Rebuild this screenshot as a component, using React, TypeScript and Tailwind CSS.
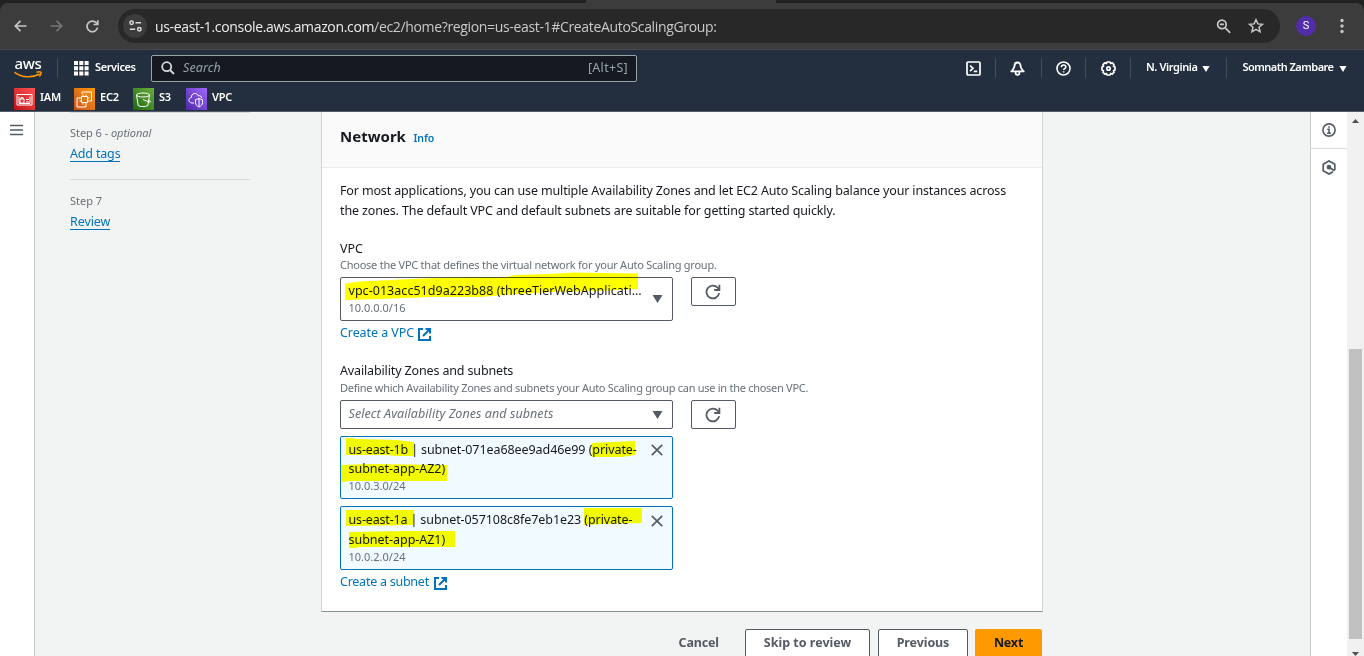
import type { ReactNode } from 'react';

function Highlight({ points, className }: { points: string; className: string }) {
  return (
    <svg className={`pointer-events-none absolute mix-blend-multiply ${className}`} fill="#ffff00">
      <polygon points={points} />
    </svg>
  );
}

function Caret({ className = 'h-[8px] w-[11px]' }: { className?: string }) {
  return (
    <svg viewBox="0 0 11 8" fill="currentColor" preserveAspectRatio="none" className={`shrink-0 ${className}`}>
      <path d="M0.5 0h10L5.5 8z" />
    </svg>
  );
}

function RefreshButton() {
  return (
    <button className="flex h-[29px] w-[45px] shrink-0 items-center justify-center rounded-[2px] border border-[#545b64] bg-white pr-px text-[#545b64]">
      <svg width="16" height="16" viewBox="0 0 16 16" fill="none" stroke="currentColor" strokeWidth="1.8">
        <path d="M14.2 9.2A6.4 6.4 0 1 1 12.6 3.6L14.6 5.6" />
        <path d="M14.4 0.8v5.2H9.2" />
      </svg>
    </button>
  );
}

function External() {
  return (
    <svg className="mt-[2px]" width="13" height="13" viewBox="0 0 13 13" fill="none" stroke="#0073bb" strokeWidth="2">
      <path d="M5 1H1v11h11V8M7.5 1H12v4.5M12 1L5 8" />
    </svg>
  );
}

function Divider({ className }: { className: string }) {
  return <div className={`h-5 w-px shrink-0 bg-[#414d5c] ${className}`} />;
}

function BrowserBar() {
  return (
    <div className="h-[50px] bg-[#202222] font-['Open_Sans',sans-serif]">
      <div className="flex h-[3px]">
        <div className="ml-[586px] h-[3px] w-[190px] bg-[#3c3c3c]" />
      </div>
      <div className="flex h-[47px] items-center rounded-t-[8px] border-b border-[#4a4a4c] bg-[#3c3c3c] text-[#c7c7c7]">
        <svg className="ml-[14px]" width="13" height="12" viewBox="0 0 13 12" fill="none" stroke="#c7c7c7" strokeWidth="1.7">
          <path d="M12.5 6H1.5M6.5 .8L1.3 6l5.2 5.2" />
        </svg>
        <svg className="ml-[23px]" width="13" height="12" viewBox="0 0 13 12" fill="none" stroke="#767676" strokeWidth="1.7">
          <path d="M.5 6h11M6.5 .8L11.7 6l-5.2 5.2" />
        </svg>
        <svg className="ml-[23px]" width="13" height="13" viewBox="0 0 13 13" fill="none" stroke="#c7c7c7" strokeWidth="1.7">
          <path d="M11.5 7.6A5.3 5.3 0 1 1 10.3 2.9L11.6 4.2" />
          <path d="M11.8 .3v4.2H7.5" />
        </svg>
        <div className="ml-[19px] flex h-[34px] w-[1162px] items-center rounded-full bg-[#282828]">
          <div className="ml-[5px] flex size-6 items-center justify-center rounded-full bg-[#3c3c3c]">
            <svg width="13" height="12" viewBox="0 0 13 12" fill="none" stroke="#dcdcdc" strokeWidth="1.5">
              <circle cx="2.6" cy="2.8" r="1.7" />
              <path d="M6.5 2.8h5.5M.8 9.2h5.4" />
              <circle cx="10.3" cy="9.2" r="1.7" />
            </svg>
          </div>
          <span className="mt-px ml-2 text-[14px] leading-5 tracking-[-0.34px] whitespace-nowrap text-[#c9c9c9]">
            <span className="text-[#ececec]">us-east-1.console.aws.amazon.com</span>/ec2/home?region=us-east-1#CreateAutoScalingGroup:
          </span>
        </div>
      </div>
    </div>
  );
}

function BrowserIcons() {
  return (
    <div className="absolute top-[16px] left-[1216px] flex h-5 items-center">
      <svg width="15" height="15" viewBox="0 0 15 15" fill="none" stroke="#c7c7c7" strokeWidth="1.7">
        <circle cx="5.9" cy="5.4" r="4.3" />
        <path d="M9 8.6L14.2 13.8M3.9 5.4h4" />
      </svg>
      <svg className="ml-[17px]" width="16" height="16" viewBox="0 0 16 16" fill="none" stroke="#c7c7c7" strokeWidth="1.5">
        <path d="M8 1.7l1.9 4.2 4.6.4-3.5 3 1.1 4.5L8 11.4l-4.1 2.4L5 9.3l-3.5-3 4.6-.4z" />
      </svg>
      <div className="ml-[32px] flex size-5 items-center justify-center rounded-full bg-[#512da8] font-['Roboto',sans-serif] text-[11px] text-white">S</div>
      <svg className="ml-[24px]" width="4" height="16" viewBox="0 0 4 16" fill="#c7c7c7">
        <circle cx="2" cy="2.5" r="1.7" />
        <circle cx="2" cy="8" r="1.7" />
        <circle cx="2" cy="13.5" r="1.7" />
      </svg>
    </div>
  );
}

function Service({ label, tile, children, className }: { label: string; tile: string; children: ReactNode; className: string }) {
  return (
    <div className={`flex items-center ${className}`}>
      <div className={`flex h-[22px] w-[21px] items-center justify-center ${tile}`}>
        <svg width="17" height="17" viewBox="0 0 17 17" fill="none" stroke="#ffffff" strokeWidth="1">
          {children}
        </svg>
      </div>
      <span className="mb-[4px] ml-[5px] text-[11px] leading-4 font-semibold tracking-[-0.2px] text-white">{label}</span>
    </div>
  );
}

function AwsNav() {
  return (
    <div className="h-[62px] border-b border-[#545b64] bg-[#232f3e] text-white">
      <div className="flex h-[36px] items-center">
        <div className="ml-[14px] flex w-[28px] flex-col items-center">
          <span className="h-[13px] text-[15px] leading-[11px] font-medium tracking-[-0.3px]">aws</span>
          <svg className="h-[7px] w-[28px]" viewBox="0 0 28 7" fill="none" stroke="#ff9900" strokeWidth="1.5">
            <path d="M.5 1.3C8 6.7 18 7.2 25.5 3M22.5 1.2c3-.7 5-.3 4.6.5-.1 1.3-.8 2.6-1.8 3.9" />
          </svg>
        </div>
        <Divider className="ml-[15px]" />
        <svg className="ml-[16px] shrink-0" width="15" height="15" viewBox="0 0 15 15" fill="#ffffff">
          <path d="M0 0h4v4H0zM5.3 0h4v4h-4zM10.6 0h4v4h-4zM0 5.3h4v4H0zM5.3 5.3h4v4h-4zM10.6 5.3h4v4h-4zM0 10.6h4v4H0zM5.3 10.6h4v4h-4zM10.6 10.6h4v4h-4z" />
        </svg>
        <span className="mb-[2px] ml-[6px] w-[41px] text-[11px] leading-4 font-semibold tracking-[-0.4px] whitespace-nowrap">Services</span>
        <div className="ml-[15px] flex h-[27px] w-[486px] items-center rounded-[2px] border border-[#95a5a6] bg-[#161922]">
          <svg className="ml-[9px]" width="14" height="14" viewBox="0 0 14 14" fill="none" stroke="#d5dbdb" strokeWidth="1.8">
            <circle cx="5.7" cy="5.7" r="4.5" />
            <path d="M9 9l4 4" />
          </svg>
          <span className="ml-[8px] text-[12.5px] tracking-[0.1px] text-[#95a5a6] italic">Search</span>
          <span className="mr-[8px] ml-auto text-[12.5px] tracking-[0.3px] text-[#95a5a6]">[Alt+S]</span>
        </div>
        <svg className="ml-[329px] shrink-0" width="15" height="15" viewBox="0 0 15 15" fill="none" stroke="#ffffff" strokeWidth="1.7">
          <rect x="1" y="1" width="13" height="13" rx="1" />
          <path d="M4 4.5l3 2.8-3 2.8M7.8 10.3h3.4" />
        </svg>
        <Divider className="ml-[14px]" />
        <svg className="ml-[14px] shrink-0" width="15" height="15" viewBox="0 0 15 15" fill="none" stroke="#ffffff" strokeWidth="1.8" strokeLinejoin="round">
          <path d="M7.5 1.5C5.4 1.5 4.5 3.2 4.5 5c0 2.3-1.3 3.3-3.2 5.4h12.4C11.8 8.3 10.5 7.3 10.5 5c0-1.8-.9-3.5-3-3.5z" />
          <path d="M5.6 10.8v1.2c0 2.4 3.8 2.4 3.8 0v-1.2" />
        </svg>
        <Divider className="ml-[16px]" />
        <svg className="ml-[14px] shrink-0" width="15" height="15" viewBox="0 0 15 15" fill="none" stroke="#ffffff" strokeWidth="1.6">
          <circle cx="7.5" cy="7.5" r="6.5" />
          <path d="M5.3 6.2c0-3 4.5-2.7 4.5-.1 0 1.5-2.2 1.5-2.2 3M7.6 10.2v1.4" />
        </svg>
        <Divider className="ml-[14px]" />
        <svg className="ml-[15px] shrink-0" width="15" height="15" viewBox="0 0 15 15" fill="none" stroke="#ffffff" strokeWidth="1.7" strokeLinejoin="round">
          <path d="M6 1h3l.6 1.5 1.7-.6 1.8 1.9-.6 1.5L14 6v3l-1.5.7.6 1.5-1.9 1.9-1.6-.6L9 14H6l-.6-1.5-1.6.6-1.9-1.9.6-1.5L1 9V6l1.5-.7-.6-1.5 1.8-1.9 1.7.6z" />
          <circle cx="7.5" cy="7.5" r="1.7" />
        </svg>
        <Divider className="ml-[14px]" />
        <span className="mb-[2px] ml-[15px] w-[51px] text-[11px] leading-4 font-semibold tracking-[-0.4px] whitespace-nowrap">N. Virginia</span>
        <Caret className="mt-px ml-[5px] h-[6px] w-[8px]" />
        <Divider className="ml-[16px]" />
        <span className="mb-[2px] ml-[15.5px] w-[92.5px] text-[11px] leading-4 font-semibold tracking-[-0.52px] whitespace-nowrap">Somnath Zambare</span>
        <Caret className="mt-px ml-[4px] h-[6px] w-[8px]" />
      </div>
      <div className="flex h-[25px] items-center pt-[1px] pl-[14px]">
        <Service label="IAM" tile="bg-linear-to-tr from-[#bd0816] to-[#ff5252]" className="w-[60px]">
          <path d="M1 3.5h15v10.5H1zM3 5.5v7M14 5.5v7M4 8h4v4H4zM5 8V6.5h2V8M10 8.5h3M10 11h3M3 12.5h11" />
        </Service>
        <Service label="EC2" tile="bg-linear-to-tr from-[#c8511b] to-[#ff9900]" className="w-[59px]">
          <path d="M5.5 5.5h6v6h-6zM7 3.5v2M10 3.5v2M7 11.5v2M10 11.5v2M3.5 7h2M3.5 10h2M11.5 7h2M11.5 10h2M6 3V1h9.5v9H14M4 7H1v9h9v-2.5" />
        </Service>
        <Service label="S3" tile="bg-linear-to-tr from-[#1b660f] to-[#6cae3e]" className="w-[53px]">
          <ellipse cx="8" cy="4" rx="6.5" ry="2" />
          <path d="M1.5 4l1.7 10.5c2 1.5 7.5 1.5 9.6 0L14.5 4M8 8.5l6 2.5c2 .5 2-.5 0-2" />
        </Service>
        <Service label="VPC" tile="bg-linear-to-tr from-[#4d27a8] to-[#a166ff]" className="">
          <path d="M6 12H4c-4-.5-4-5-.6-5.5C3 2 9 1 10.5 5c2-1 3 .5 3 2M11 7.5l3.5 1.2v3c0 2-1.5 3.3-3.5 4.3-2-1-3.5-2.3-3.5-4.3v-3zM11 7.5v8" />
        </Service>
      </div>
    </div>
  );
}

interface TokenProps {
  zone: string;
  subnet: string;
  name: string;
  cidr: string;
  className: string;
  closeClass: string;
}

function Token({ zone, subnet, name, cidr, className, closeClass }: TokenProps) {
  return (
    <div className={`flex w-[333px] justify-between rounded-[2px] border border-[#0073bb] bg-[#f1faff] pr-[9px] pl-[7.5px] ${className}`}>
      <div className="whitespace-nowrap">
        <p>
          <span className="tracking-[-0.16px]">{zone} | </span>
          <span className="tracking-[-0.07px]">{subnet} (private-</span>
          <br />
          <span className="tracking-[-0.03px]">{name}</span>
        </p>
        <p className="text-[11px] leading-[15px] text-[#687078]">{cidr}</p>
      </div>
      <svg className={closeClass} width="12" height="12" viewBox="0 0 12 12" stroke="#545b64" strokeWidth="1.7">
        <path d="M.8 .8l10.4 10.4M11.2 .8L.8 11.2" />
      </svg>
    </div>
  );
}

function Sidebar() {
  return (
    <div className="ml-[35px] flex w-[180px] shrink-0 flex-col items-start">
      <div className="h-px w-full bg-[#d5dbdb]" />
      <p className="mt-[12px] text-[11px] leading-4 tracking-[-0.05px] text-[#687078]">
        Step 6 - <span className="italic">optional</span>
      </p>
      <a className="mt-[5px] h-4 border-b border-[#0073bb] text-[12.5px] leading-4 tracking-[-0.17px] text-[#0073bb]">Add tags</a>
      <div className="mt-[17px] h-px w-full bg-[#d5dbdb]" />
      <p className="mt-[13px] text-[11px] leading-4 text-[#687078]">Step 7</p>
      <a className="mt-[5px] h-4 border-b border-[#0073bb] text-[12.5px] leading-4 tracking-[-0.1px] text-[#0073bb]">Review</a>
    </div>
  );
}

function NetworkCard() {
  return (
    <section className="relative h-[500px] w-[722px] border-x border-b border-[#d0d5d5] border-b-[#879596] bg-white text-[12.5px] text-[#16191f]">
      <header className="flex h-[56px] items-start border-b border-[#eaeded] bg-[#fafafa] pt-[14px] pl-[18px]">
        <h2 className="text-[15px] leading-5 font-bold">Network</h2>
        <a className="mt-[4px] ml-[7.5px] text-[10.5px] leading-4 font-semibold text-[#0073bb]">Info</a>
      </header>
      <div className="flex flex-col pt-[13px] pl-[18px] whitespace-nowrap">
        <p className="leading-5 tracking-[-0.14px]">
          For most applications, you can use multiple Availability Zones and let EC2 Auto Scaling balance your instances across
          <br />
          <span className="tracking-[-0.125px]">the zones. The default VPC and default subnets are suitable for getting started quickly.</span>
        </p>
        <label className="mt-5 leading-4">VPC</label>
        <p className="text-[11px] leading-4 tracking-[-0.245px] text-[#687078]">Choose the VPC that defines the virtual network for your Auto Scaling group.</p>
        <div className="mt-1 flex gap-[18px]">
          <div className="flex h-[44px] w-[333px] items-center justify-between rounded-[2px] border border-[#545b64] pr-[9.5px] pl-[7.5px]">
            <div>
              <p className="leading-[18px] tracking-[0.04px]">vpc-013acc51d9a223b88 (threeTierWebApplicati…</p>
              <p className="text-[11px] leading-4 text-[#687078]">10.0.0.0/16</p>
            </div>
            <Caret className="h-[8px] w-[11px] text-[#545b64]" />
          </div>
          <RefreshButton />
        </div>
        <a className="mt-1 flex items-center gap-1 leading-4 tracking-[-0.08px] text-[#0073bb]">
          Create a VPC <External />
        </a>
        <label className="mt-[22px] leading-4 tracking-[-0.14px]">Availability Zones and subnets</label>
        <p className="mt-px text-[11px] leading-4 tracking-[-0.275px] text-[#687078]">Define which Availability Zones and subnets your Auto Scaling group can use in the chosen VPC.</p>
        <div className="mt-1 flex gap-[18px]">
          <div className="flex h-[29px] w-[333px] items-center justify-between rounded-[2px] border border-[#545b64] pr-[9.5px] pl-[7.5px]">
            <span className="tracking-[0.07px] text-[#687078] italic">Select Availability Zones and subnets</span>
            <Caret className="h-[8px] w-[11px] text-[#545b64]" />
          </div>
          <RefreshButton />
        </div>
        <Token
          className="mt-[7px] h-[63px] pt-[3px] leading-[19px]"
          closeClass="mt-[4px]"
          zone="us-east-1b"
          subnet="subnet-071ea68ee9ad46e99"
          name="subnet-app-AZ2)"
          cidr="10.0.3.0/24"
        />
        <Token
          className="mt-[7px] h-[64px] pt-[3px] leading-[19.5px]"
          closeClass="mt-[5px]"
          zone="us-east-1a"
          subnet="subnet-057108c8fe7eb1e23"
          name="subnet-app-AZ1)"
          cidr="10.0.2.0/24"
        />
        <a className="mt-1 flex items-center gap-[5px] leading-4 tracking-[-0.25px] text-[#0073bb]">
          Create a subnet <External />
        </a>
      </div>
      <Highlight
        className="top-[160px] left-[23px] h-[30px] w-[296px]"
        points="0,11.5 15,9.5 55,7.5 103,5.5 160,5.2 171,3 205,2 230,.5 293,1.5 293,17 255,19 205,20 160,23 135,25 85,25 35,27 0,28"
      />
      <Highlight className="top-[326px] left-[24px] h-[22px] w-[70px]" points="0,0 6,0 10,1 50,2 68,4 68,18 50,18 40,17 0,17" />
      <Highlight className="top-[327px] left-[270px] h-[20px] w-[44px]" points="0,4 20,3 43,2 43,16 30,18 0,18" />
      <Highlight className="top-[352px] left-[19px] h-[18px] w-[108px]" points="0,1 30,0 106,1 106,17 10,17 0,18" />
      <Highlight className="top-[397px] left-[24px] h-[18px] w-[70px]" points="0,1 68,1 68,16 0,17" />
      <Highlight className="top-[396px] left-[262px] h-[17px] w-[60px]" points="0,0 58,0 58,15 20,16 0,17" />
      <Highlight className="top-[419px] left-[27px] h-[17px] w-[108px]" points="0,1 55,0 106,0 106,16 9,16 9,17 0,17" />
    </section>
  );
}

function Footer() {
  return (
    <div className="mt-[17px] flex h-[29px] items-start text-[12.5px] font-bold text-[#545b64]">
      <span className="ml-[357.5px] w-[66.5px] leading-[28px] tracking-[-0.15px]">Cancel</span>
      <button className="h-[29px] w-[125px] rounded-[2px] border border-[#545b64] bg-white">Skip to review</button>
      <button className="ml-2 h-[29px] w-[90px] rounded-[2px] border border-[#545b64] bg-white tracking-[-0.1px]">Previous</button>
      <button className="ml-[7px] h-[29px] w-[67px] rounded-[2px] bg-[#ff9900] tracking-[-0.2px] text-[#16191f]">Next</button>
    </div>
  );
}

export default function App() {
  return (
    <div className="relative flex h-[656px] w-[1364px] flex-col overflow-hidden bg-white font-['Noto_Sans','Open_Sans',sans-serif]">
      <BrowserBar />
      <BrowserIcons />
      <AwsNav />
      <div className="flex h-[544px]">
        <div className="w-[35px] border-r border-[#c3cccc] bg-white">
          <svg className="mt-[12px] ml-[10px]" width="13" height="12" viewBox="0 0 13 12" stroke="#545b64" strokeWidth="1.7">
            <path d="M0 1.5h13M0 6h13M0 10.5h13" />
          </svg>
        </div>
        <main className="flex h-[544px] w-[1275px] bg-[#f2f3f3]">
          <Sidebar />
          <div className="ml-[71px] w-[722px]">
            <NetworkCard />
            <Footer />
          </div>
        </main>
        <aside className="w-[37px] border-l border-[#c9cfcf] bg-white">
          <div className="flex h-[37px] items-center justify-center border-b border-[#d5dbdb]">
            <svg width="14" height="14" viewBox="0 0 14 14" fill="none" stroke="#545b64" strokeWidth="1.6">
              <circle cx="7" cy="7" r="6.1" />
              <path d="M5.3 6.3H7v4M5 10.3h4M7 3.2v1.6" />
            </svg>
          </div>
          <div className="flex h-[37px] items-center justify-center">
            <svg width="14" height="15" viewBox="0 0 14 15" fill="none" stroke="#545b64" strokeWidth="1.7">
              <path d="M11 11.7l-4 2.4L1.2 10.8V4.2L7 .9l5.8 3.3v6" />
              <circle cx="7" cy="7.2" r="1.5" fill="#545b64" />
              <path d="M7 7.2l5.5 3.6" />
            </svg>
          </div>
        </aside>
        <div className="flex w-[17px] flex-col items-center bg-[#f1f1f1]">
          <svg className="mt-[7px]" width="7" height="4" viewBox="0 0 7 4" fill="#505050">
            <path d="M3.5 0L7 4H0z" />
          </svg>
          <div className="mt-[226px] h-[290px] w-[13px] bg-[#c1c1c1]" />
          <svg className="mt-[13px]" width="7" height="4" viewBox="0 0 7 4" fill="#505050">
            <path d="M0 0h7L3.5 4z" />
          </svg>
        </div>
      </div>
    </div>
  );
}
